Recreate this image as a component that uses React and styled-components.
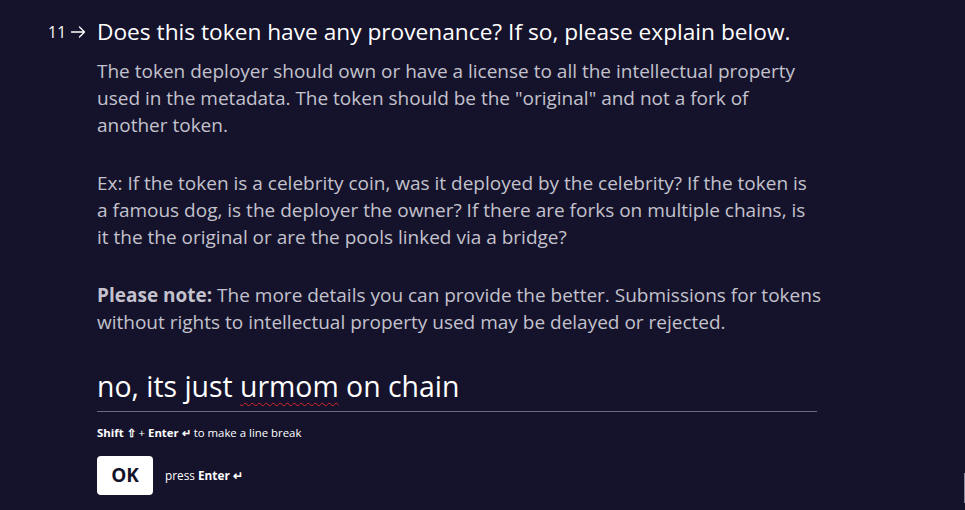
import React from "react";
import styled, { createGlobalStyle } from "styled-components";

const Global = createGlobalStyle`
  html, body { margin: 0; padding: 0; background: #15132b; }
  body { font-family: "Open Sans", "Noto Sans", sans-serif; -webkit-font-smoothing: antialiased; }
`;

const Page = styled.main`
  min-height: 510px;
  box-sizing: border-box;
  padding: 17px 0 0 48px;
  display: flex;
  position: relative;
  overflow: hidden;
`;

const Counter = styled.div`
  width: 49px;
  flex: none;
  display: flex;
  align-items: center;
  gap: 4px;
  height: 30px;
  color: #ffffff;
  font-size: 15.5px;
  letter-spacing: 0.3px;
`;

const Content = styled.section`
  width: 720px;
  display: flex;
  flex-direction: column;
`;

const Title = styled.h1`
  margin: 0;
  font-weight: 400;
  font-size: 22.7px;
  line-height: 30px;
  color: #ffffff;
  white-space: nowrap;
`;

const Description = styled.div`
  margin-top: 10.5px;
  color: #c3c2cd;
  font-size: 19px;
  line-height: 27px;
  white-space: nowrap;
`;

const Para = styled.p`
  margin: 0 0 ${(p) => (p.$last ? 0 : 31)}px 0;
`;

const AnswerField = styled.div`
  margin-top: 31px;
  padding-bottom: 6px;
  border-bottom: 1px solid #6c6a82;
  color: #ffffff;
  font-size: 28.4px;
  line-height: 38px;
`;

const Misspelled = styled.span`
  text-decoration: underline wavy #d8262b;
  text-decoration-thickness: 1px;
  text-underline-offset: 5px;
`;

const Hint = styled.div`
  margin-top: 13px;
  font-size: 11.4px;
  line-height: 16px;
  color: #ffffff;
`;

const Actions = styled.div`
  margin-top: 15px;
  display: flex;
  align-items: center;
  gap: 12px;
`;

const OkButton = styled.button`
  width: 56px;
  height: 39px;
  border: none;
  border-radius: 4px;
  background: #ffffff;
  color: #15132b;
  font-family: inherit;
  font-weight: 700;
  font-size: 19px;
  padding: 0;
  cursor: pointer;
`;

const PressHint = styled.span`
  font-size: 11.8px;
  color: #ffffff;
`;

const EdgeTab = styled.div`
  position: absolute;
  right: 0;
  top: 473px;
  width: 1px;
  height: 30px;
  background: #8a889c;
`;

const Arrow = () => (
  <svg width="16" height="16" viewBox="0 0 16 16" fill="none" stroke="#fff" strokeWidth="1.3" strokeLinecap="round" strokeLinejoin="round">
    <path d="M1.5 8h13M9.5 3l5 5-5 5" />
  </svg>
);

export default function App() {
  return (
    <>
      <Global />
      <Page>
        <Counter>
          <span>11</span>
          <Arrow />
        </Counter>
        <Content>
          <Title>Does this token have any provenance? If so, please explain below.</Title>
          <Description>
            <Para>
              The token deployer should own or have a license to all the intellectual property
              <br />
              used in the metadata. The token should be the "original" and not a fork of
              <br />
              another token.
            </Para>
            <Para>
              Ex: If the token is a celebrity coin, was it deployed by the celebrity? If the token is
              <br />
              a famous dog, is the deployer the owner? If there are forks on multiple chains, is
              <br />
              it the the original or are the pools linked via a bridge?
            </Para>
            <Para $last>
              <b>Please note:</b> The more details you can provide the better. Submissions for tokens
              <br />
              without rights to intellectual property used may be delayed or rejected.
            </Para>
          </Description>
          <AnswerField>
            no, its just <Misspelled>urmom</Misspelled> on chain
          </AnswerField>
          <Hint>
            <b>Shift ⇧</b> + <b>Enter ↵</b> to make a line break
          </Hint>
          <Actions>
            <OkButton>OK</OkButton>
            <PressHint>
              press <b>Enter ↵</b>
            </PressHint>
          </Actions>
        </Content>
        <EdgeTab />
      </Page>
    </>
  );
}
